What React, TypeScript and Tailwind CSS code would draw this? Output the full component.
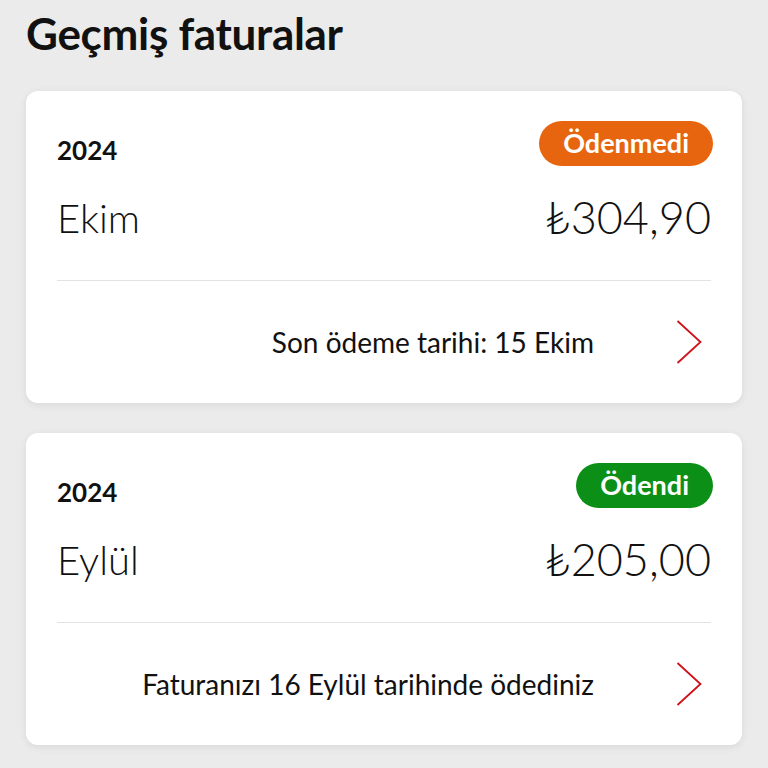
const BILLS = [
  {
    year: "2024",
    month: "Ekim",
    amount: "304,90",
    status: "Ödenmedi",
    badge: "bg-[#e8650f]",
    note: "Son ödeme tarihi: 15 Ekim",
  },
  {
    year: "2024",
    month: "Eylül",
    amount: "205,00",
    status: "Ödendi",
    badge: "bg-[#0c8f17]",
    note: "Faturanızı 16 Eylül tarihinde ödediniz",
  },
];

function Chevron() {
  return (
    <svg width="26" height="44" viewBox="0 0 26 44" fill="none" className="shrink-0">
      <path d="M1.5 1 L24.5 22 L1.5 43" stroke="#d0111b" strokeWidth="1.8" />
    </svg>
  );
}

export default function App() {
  return (
    <div className="min-h-[768px] w-[768px] bg-[#ebebeb] px-[26px] pt-[8px] font-['Lato','Noto_Sans',sans-serif] text-[#111]">
      {/* Header */}
      <h1 className="text-[44px] font-bold leading-[50px] tracking-[-0.3px]">Geçmiş faturalar</h1>

      <div className="mt-[33px] flex flex-col gap-[30px]">
        {BILLS.map((bill) => (
          <div key={bill.month} className="rounded-[12px] bg-white pl-[31px] pr-[29px] pt-[30px] shadow-[0_2px_8px_rgba(0,0,0,0.08)]">
            <div className="flex h-[45px] items-center justify-between">
              <span className="mt-[14px] text-[26px] font-bold">{bill.year}</span>
              <span className={`${bill.badge} flex h-[45px] items-center rounded-full px-[24px] text-[27px] font-bold text-white`}>
                {bill.status}
              </span>
            </div>
            <div className="mt-[29px] flex h-[46px] items-center justify-between">
              <span className="text-[40px] font-light">{bill.month}</span>
              <span className="mr-[2px] text-[45px] font-light">₺{bill.amount}</span>
            </div>
            <div className="mt-[39px] mr-[2px] h-px bg-[#e3e3e3]" />
            <div className="flex h-[122px] items-center justify-end gap-[82px] pr-[11px]">
              <span className="text-[28px]">{bill.note}</span>
              <Chevron />
            </div>
          </div>
        ))}
      </div>
    </div>
  );
}
